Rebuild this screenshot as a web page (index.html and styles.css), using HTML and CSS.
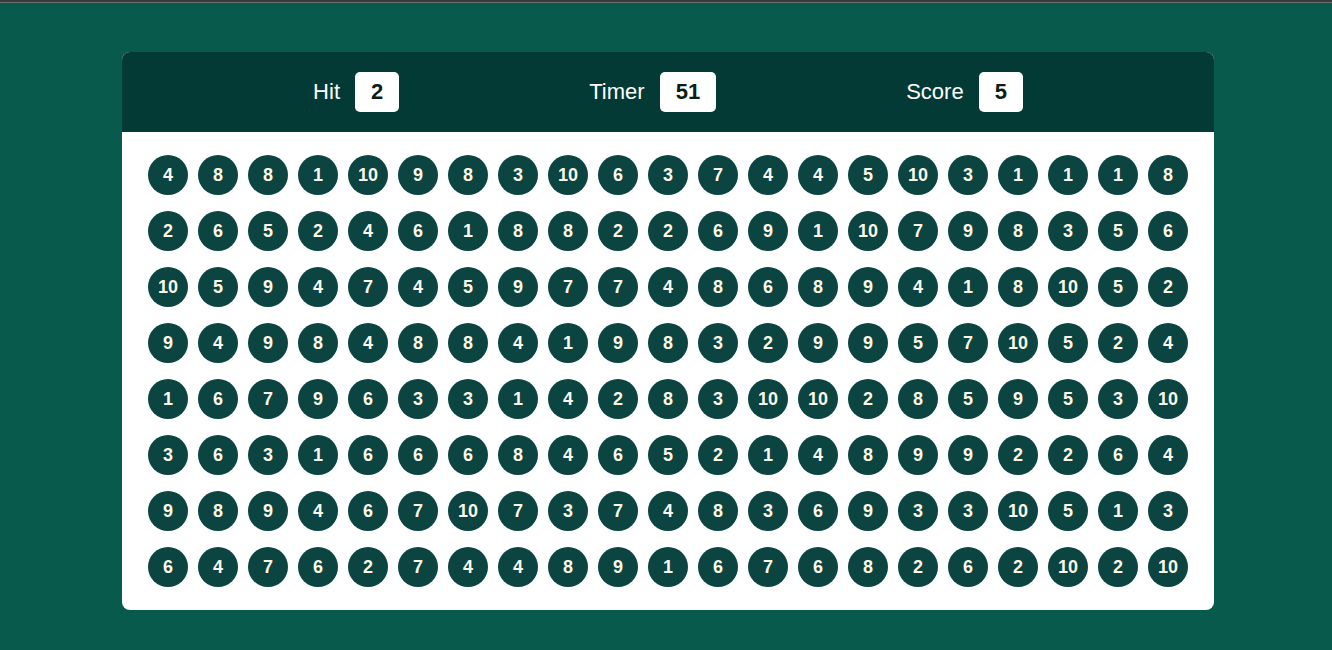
FILE: index.html
```html
<!DOCTYPE html>
<html>
<head>
<meta charset="utf-8">
<link rel="stylesheet" href="styles.css">
</head>
<body>
<div class="topbar"></div>
<main class="game">
  <header class="stats">
    <div class="stat"><span class="label">Hit</span><span class="value">2</span></div>
    <div class="stat"><span class="label">Timer</span><span class="value">51</span></div>
    <div class="stat"><span class="label">Score</span><span class="value">5</span></div>
  </header>
  <section class="board" id="board"></section>
</main>
<script>
const rows = [
"4 8 8 1 10 9 8 3 10 6 3 7 4 4 5 10 3 1 1 1 8",
"2 6 5 2 4 6 1 8 8 2 2 6 9 1 10 7 9 8 3 5 6",
"10 5 9 4 7 4 5 9 7 7 4 8 6 8 9 4 1 8 10 5 2",
"9 4 9 8 4 8 8 4 1 9 8 3 2 9 9 5 7 10 5 2 4",
"1 6 7 9 6 3 3 1 4 2 8 3 10 10 2 8 5 9 5 3 10",
"3 6 3 1 6 6 6 8 4 6 5 2 1 4 8 9 9 2 2 6 4",
"9 8 9 4 6 7 10 7 3 7 4 8 3 6 9 3 3 10 5 1 3",
"6 4 7 6 2 7 4 4 8 9 1 6 7 6 8 2 6 2 10 2 10"
];
const board = document.getElementById('board');
rows.forEach(r => r.split(' ').forEach(n => {
  const b = document.createElement('div');
  b.className = 'bubble';
  b.textContent = n;
  board.appendChild(b);
}));
</script>
</body>
</html>
```
FILE: styles.css
```css
html, body {
  margin: 0;
  padding: 0;
}
body {
  background: #085b4c;
  font-family: "Liberation Sans", Arial, sans-serif;
  height: 650px;
  overflow: hidden;
}
.topbar {
  height: 2px;
  background: #3b3b3b;
  border-bottom: 1px solid #6b7470;
}
.game {
  width: 1092px;
  margin: 49px 0 0 122px;
  background: #ffffff;
  border-radius: 8px;
  overflow: hidden;
}
.stats {
  height: 80px;
  background: #033a36;
  display: flex;
  justify-content: center;
  align-items: center;
  gap: 190px;
}
.stat {
  display: flex;
  align-items: center;
  gap: 15px;
}
.label {
  color: #ffffff;
  font-size: 22px;
}
.value {
  background: #ffffff;
  color: #0b1f16;
  font-weight: bold;
  font-size: 22px;
  height: 40px;
  line-height: 40px;
  padding: 0 16px;
  border-radius: 5px;
}
.board {
  padding: 23px 26px;
  display: grid;
  grid-template-columns: repeat(21, 40px);
  column-gap: 10px;
  row-gap: 16px;
}
.bubble {
  width: 40px;
  height: 40px;
  border-radius: 50%;
  background: #0b4440;
  color: #fbf8ea;
  font-weight: bold;
  font-size: 18px;
  display: flex;
  align-items: center;
  justify-content: center;
}
```
